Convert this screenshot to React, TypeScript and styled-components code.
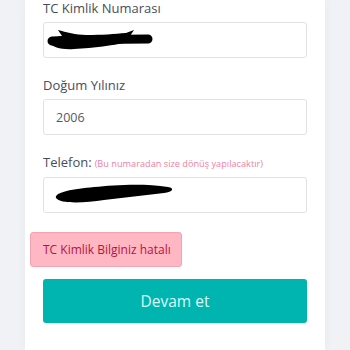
import React from 'react';
import styled, { createGlobalStyle } from 'styled-components';

const GlobalStyle = createGlobalStyle`
    html, body {
        margin: 0;
        padding: 0;
        background: #f1f2f6;
        font-family: 'Open Sans', 'Noto Sans', sans-serif;
    }
`;

const Page = styled.div`
    width: 350px;
    height: 350px;
    overflow: hidden;
    display: flex;
    justify-content: center;
`;

const Card = styled.div`
    width: 300px;
    height: 350px;
    background: #ffffff;
    box-shadow: 0 0 10px rgba(60, 70, 100, 0.05);
    padding: 0 18px;
    box-sizing: border-box;
`;

const Group = styled.div`
    margin-bottom: 19px;
`;

const Label = styled.label`
    display: block;
    font-size: 13px;
    line-height: 17px;
    color: #474d5c;
    margin-bottom: 5px;
    white-space: nowrap;
`;

const Hint = styled.span`
    font-size: 9.2px;
    color: #f07fa2;
    margin-left: 3px;
`;

const Field = styled.div`
    position: relative;
    height: 36px;
    border: 1px solid #dfe2e8;
    border-radius: 3px;
    box-sizing: border-box;
    display: flex;
    align-items: center;
    padding: 0 12px;
    font-size: 12.5px;
    color: #555a66;
`;

const Redaction = styled.svg`
    position: absolute;
    left: 0;
    top: 0;
`;

const Alert = styled.div`
    width: 152px;
    height: 35px;
    margin-left: -13px;
    box-sizing: border-box;
    background: #ffb7c3;
    border: 1px solid #f5a3b2;
    border-radius: 3px;
    display: flex;
    align-items: center;
    padding-left: 12px;
    font-size: 12px;
    color: #b8123c;
    white-space: nowrap;
`;

const Button = styled.button`
    margin-top: 12px;
    width: 100%;
    height: 44px;
    border: none;
    border-radius: 3px;
    background: #00b4b0;
    color: #dcfbf8;
    font-family: inherit;
    font-size: 15.5px;
    cursor: pointer;
`;

const App = () => (
    <Page>
        <GlobalStyle />
        <Card>
            <Group>
                <Label>TC Kimlik Numarası</Label>
                <Field>
                    <Redaction width="264" height="36" viewBox="0 0 264 36">
                        <path
                            d="M14 7 C 22 9, 32 12, 42 12 C 60 12, 70 11, 82 10 L 90 7 L 86 13 C 92 13, 98 13, 104 14 L 108 18 C 100 19, 90 19, 80 20 C 70 22, 50 25, 30 26 C 18 27, 8 24, 6 20 C 5 16, 9 14, 18 13 Z"
                            fill="#000"
                        />
                        <path d="M8 18 C 30 17, 60 16, 104 16" stroke="#000" strokeWidth="9" strokeLinecap="round" fill="none" />
                    </Redaction>
                </Field>
            </Group>
            <Group>
                <Label>Doğum Yılınız</Label>
                <Field>2006</Field>
            </Group>
            <Group>
                <Label>
                    Telefon:<Hint>(Bu numaradan size dönüş yapılacaktır)</Hint>
                </Label>
                <Field>
                    <Redaction width="264" height="36" viewBox="0 0 264 36">
                        <path
                            d="M12 20 C 10 14, 30 11, 50 9 C 70 7, 100 5, 124 9 C 131 10, 129 14, 120 15 C 100 17, 80 20, 60 22 C 40 25, 16 26, 12 20 Z"
                            fill="#000"
                        />
                    </Redaction>
                </Field>
            </Group>
            <Alert>TC Kimlik Bilginiz hatalı</Alert>
            <Button>Devam et</Button>
        </Card>
    </Page>
);

export default App;
